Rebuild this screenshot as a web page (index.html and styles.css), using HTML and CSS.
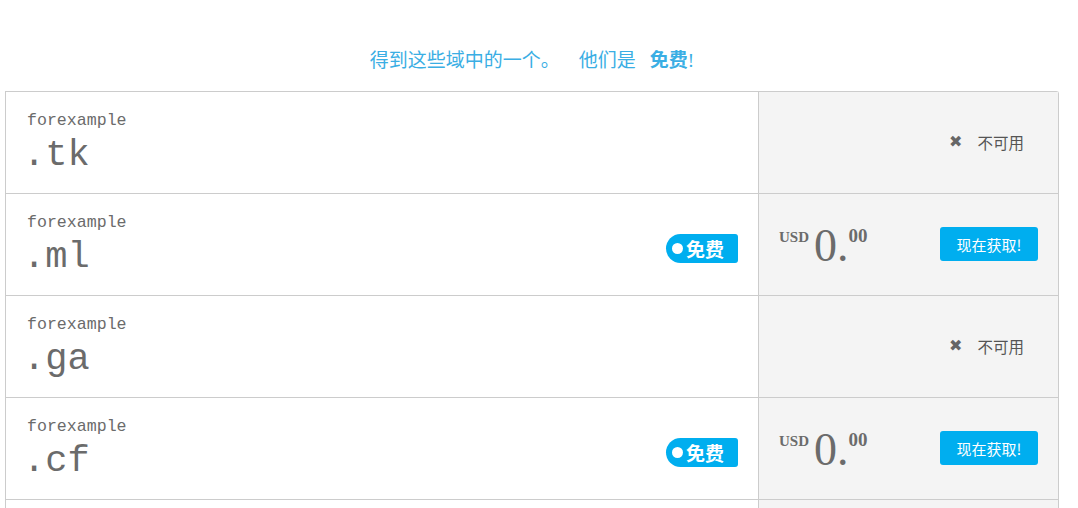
FILE: index.html
```html
<!DOCTYPE html>
<html lang="zh">
<head>
<meta charset="utf-8">
<link rel="stylesheet" href="styles.css">
</head>
<body>
<div class="page">
  <p class="intro"><span class="part">得到这些域中的一个。</span><span class="part gap1">他们是</span><strong class="gap2">免费</strong>!</p>
  <div class="domains">
    <div class="row">
      <div class="name-cell">
        <div class="base">forexample</div>
        <div class="tld">.tk</div>
      </div>
      <div class="side-cell">
        <div class="na"><span class="x">✖</span>不可用</div>
      </div>
    </div>
    <div class="row">
      <div class="name-cell">
        <div class="base">forexample</div>
        <div class="tld">.ml</div>
        <span class="badge"><span class="dot"></span>免费</span>
      </div>
      <div class="side-cell priced">
        <div class="price"><span class="cur">USD</span><span class="amt">0.</span><span class="cents">00</span></div>
        <button class="buy">现在获取!</button>
      </div>
    </div>
    <div class="row">
      <div class="name-cell">
        <div class="base">forexample</div>
        <div class="tld">.ga</div>
      </div>
      <div class="side-cell">
        <div class="na"><span class="x">✖</span>不可用</div>
      </div>
    </div>
    <div class="row">
      <div class="name-cell">
        <div class="base">forexample</div>
        <div class="tld">.cf</div>
        <span class="badge"><span class="dot"></span>免费</span>
      </div>
      <div class="side-cell priced">
        <div class="price"><span class="cur">USD</span><span class="amt">0.</span><span class="cents">00</span></div>
        <button class="buy">现在获取!</button>
      </div>
    </div>
    <div class="row">
      <div class="name-cell"></div>
      <div class="side-cell"></div>
    </div>
  </div>
</div>
</body>
</html>
```
FILE: styles.css
```css
html, body {
  margin: 0;
  padding: 0;
  background: #fff;
  font-family: "Liberation Sans", "Noto Sans CJK SC", sans-serif;
  overflow: hidden;
}
.page {
  padding: 0 0 0 5px;
  width: 1054px;
}
.intro {
  margin: 0;
  padding: 46px 0 0;
  height: 91px;
  box-sizing: border-box;
  text-align: center;
  color: #3aaee4;
  font-size: 19px;
  line-height: 26px;
  font-family: "Liberation Serif", "Noto Sans CJK SC", serif;
}
.gap1 {
  margin-left: 19px;
}
.gap2 {
  margin-left: 14px;
  font-weight: bold;
  font-family: "Noto Sans CJK SC", sans-serif;
}
.domains {
  border: 1px solid #ccc;
  border-bottom: none;
  border-radius: 0 3px 0 0;
}
.row {
  display: flex;
  height: 102px;
  box-sizing: border-box;
  border-bottom: 1px solid #ccc;
}
.name-cell {
  flex: 1;
  position: relative;
  padding: 19px 20px 0 21px;
  color: #6b6b6b;
}
.base {
  font-family: "Liberation Mono", monospace;
  font-size: 16.6px;
  line-height: 20px;
}
.tld {
  font-family: "Liberation Mono", monospace;
  font-size: 37px;
  line-height: 40px;
  margin-top: 4px;
  margin-left: -4px;
}
.badge {
  position: absolute;
  right: 20px;
  top: 40px;
  height: 29px;
  width: 72px;
  box-sizing: border-box;
  background: #00aeef;
  color: #fff;
  border-radius: 15px 3px 3px 15px;
  display: flex;
  align-items: center;
  padding-left: 6px;
  font-family: "Noto Sans CJK SC", serif;
  font-weight: bold;
  font-size: 19px;
}
.dot {
  width: 11px;
  height: 11px;
  border-radius: 50%;
  background: #fff;
  margin-right: 3px;
}
.side-cell {
  width: 300px;
  flex: none;
  background: #f4f4f4;
  border-left: 1px solid #ccc;
  display: flex;
  align-items: center;
  justify-content: flex-end;
  padding: 0 34px 0 20px;
  box-sizing: border-box;
}
.side-cell.priced {
  justify-content: space-between;
  padding-right: 20px;
  align-items: flex-start;
  padding-top: 33px;
}
.na {
  color: #555;
  font-size: 15.5px;
  font-family: "Noto Sans CJK SC", sans-serif;
  display: flex;
  align-items: center;
  margin-top: -2px;
}
.x {
  font-size: 16px;
  color: #666;
  margin-right: 15px;
  font-family: "DejaVu Sans", sans-serif;
}
.price {
  color: #6b6b6b;
  font-family: "Liberation Serif", serif;
  display: flex;
  align-items: flex-start;
  margin-top: -6px;
}
.cur {
  font-size: 15px;
  font-weight: bold;
  margin-top: 8px;
  margin-right: 5px;
}
.amt {
  font-size: 46px;
  line-height: 50px;
}
.cents {
  font-size: 19px;
  font-weight: bold;
  margin-top: 4px;
}
.buy {
  border: none;
  background: #00aeef;
  color: #fff;
  border-radius: 3px;
  width: 98px;
  height: 34px;
  font-size: 15px;
  font-family: "Noto Sans CJK SC", sans-serif;
  padding: 0;
  margin-top: 0;
}
```
